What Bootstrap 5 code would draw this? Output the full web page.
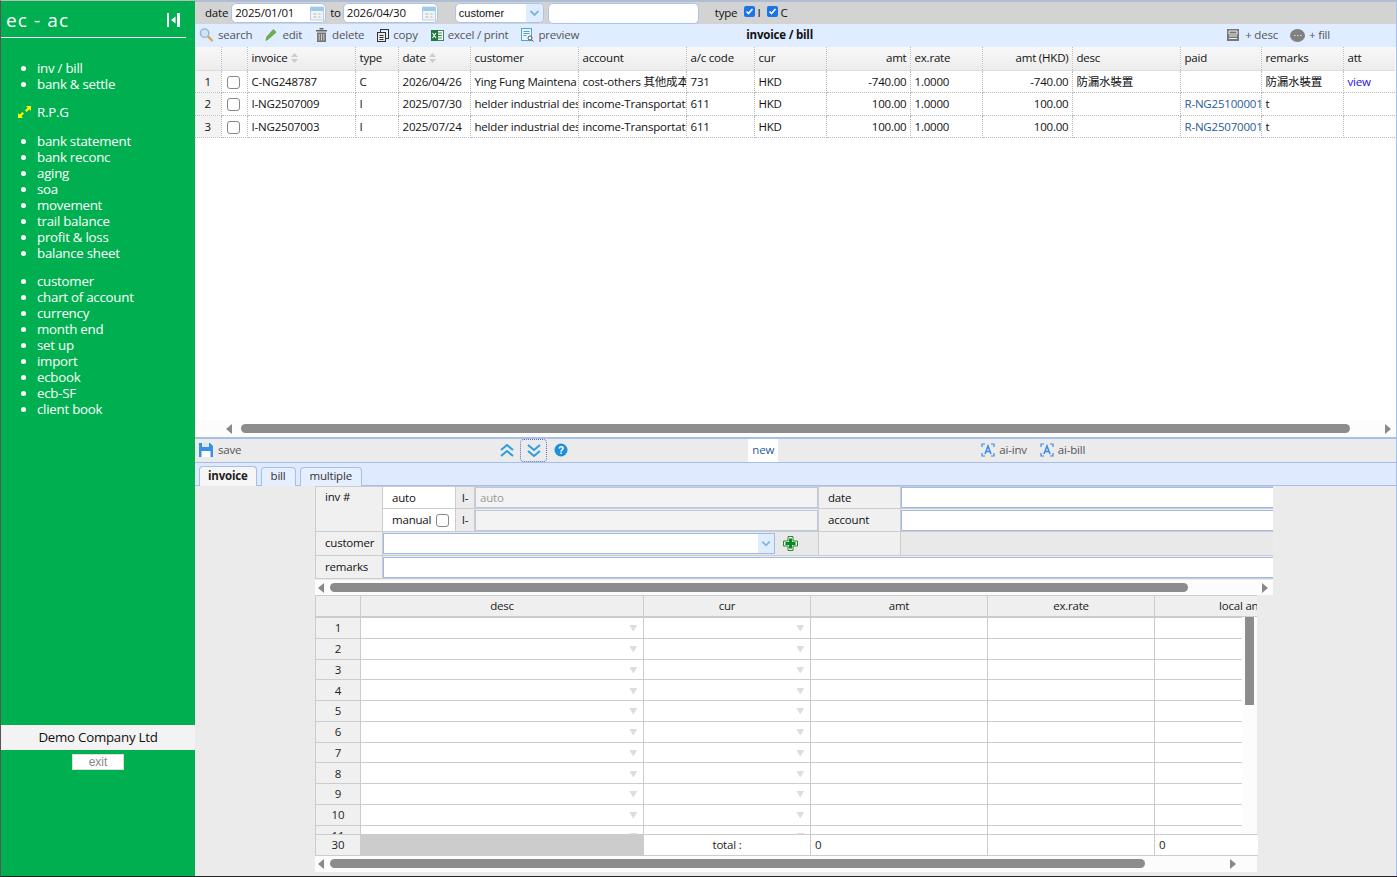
<!DOCTYPE html>
<html lang="en">
<head>
  <meta charset="UTF-8">
  <title>ec - ac</title>
  <link href="https://cdn.jsdelivr.net/npm/bootstrap@5.3.3/dist/css/bootstrap.min.css" rel="stylesheet">
  <style>
    html, body { height: 877px; overflow: hidden; }
    body {
      font-family: "Open Sans", "Noto Sans CJK TC", sans-serif;
      font-size: 11.5px;
      letter-spacing: -0.2px;
      color: #111;
      background: #fff;
      border-top: 1px solid #bbb;
      border-left: 1px solid #555;
      border-bottom: 1px solid #222;
    }
    .app-shell { height: 875px; }

    /* side menu */
    .side-menu { width: 194px; background: #00b050; color: #fff; flex: none; }
    .side-head { height: 37px; width: 185px; border-bottom: 1px solid #fff; padding: 2px 5px 0; }
    .side-title { font-size: 19px; line-height: 24px; letter-spacing: 1.1px; }
    .side-list { margin: 0; padding: 0 0 0 36px; font-size: 13.3px; letter-spacing: -0.25px; line-height: 16px; }
    .side-gap-a { margin-top: 22px; }
    .side-rpg { margin: 12px 0 0 17px; font-size: 13.3px; letter-spacing: -0.25px; line-height: 16px; gap: 6px; }
    .side-gap-b { margin-top: 13px; }
    .side-gap-c { margin-top: 12px; }
    .side-foot { padding-bottom: 106px; }
    .side-company { height: 25px; line-height: 25px; background: #f3f3f3; color: #111; font-size: 13.3px; letter-spacing: -0.25px; text-align: center; }
    .side-exit {
      width: 52px; height: 16px; margin: 4px auto 0; line-height: 15px; font-size: 12px; letter-spacing: 0;
      background: #fff; color: #888; border: 1px solid #ddd;
      font-family: "Liberation Sans", sans-serif; text-align: center;
    }

    /* top */
    .main-pane { min-width: 0; border-right: 1px solid #a4bfe8; }
    .filter-bar { height: 23px; background: #d3d3d3; border-top: 1px solid #a4bfe8; padding-left: 10px; flex: none; }
    .date-box {
      width: 95px; height: 20px; background: #fff; border: 1px solid #a9c4ec; border-radius: 5px;
      padding-left: 3px; line-height: 18px; color: #111;
    }
    .date-first { margin-left: 3px; }
    .to-label { margin: 0 2px 0 4px; }
    .cal-btn { width: 16px; height: 18px; }
    .combo-box { width: 89px; height: 20px; background: #fff; border: 1px solid #a9c4ec; border-radius: 5px; margin-left: 17px; padding-left: 3px; line-height: 18px; font-family: "Liberation Sans", sans-serif; font-size: 11px; letter-spacing: 0; }
    .combo-arrow { width: 17px; height: 18px; background: #e0ecff; border-radius: 0 4px 4px 0; }
    .text-box { width: 151px; height: 21px; background: #fff; border: 1px solid #a9c4ec; border-radius: 5px; margin-left: 4px; }
    .type-group { margin-left: 16px; gap: 7px; }
    .mini-check { width: 11px; height: 11px; background: #1a73e8; border-radius: 2px; margin: 0 2px 3px 0; display: inline-block; }

    .tool-bar { height: 23px; background: #e0ecff; color: #555; padding: 0 0 1px 4px; flex: none; }
    .tool-item { gap: 4px; margin-right: 13px; }
    .tool-title { margin-left: 154px; font-weight: 700; color: #111; }
    .tool-desc { margin-right: 12px; gap: 6px; }
    .tool-fill { margin-right: 66px; }

    /* list table */
    .list-wrap { height: 373px; flex: none; overflow: hidden; }
    .list-table { table-layout: fixed; width: 1200px; margin: 0; border-collapse: collapse; }
    .list-table col:nth-child(1), .list-table col:nth-child(2) { width: 26px; }
    .list-table col:nth-child(3) { width: 108px; }
    .list-table col:nth-child(4) { width: 43px; }
    .list-table col:nth-child(5) { width: 72px; }
    .list-table col:nth-child(6) { width: 108px; }
    .list-table col:nth-child(7) { width: 108px; }
    .list-table col:nth-child(8) { width: 68px; }
    .list-table col:nth-child(9) { width: 72px; }
    .list-table col:nth-child(10) { width: 84px; }
    .list-table col:nth-child(11) { width: 72px; }
    .list-table col:nth-child(12) { width: 90px; }
    .list-table col:nth-child(13) { width: 108px; }
    .list-table col:nth-child(14) { width: 81px; }
    .list-table col:nth-child(15) { width: 82px; }
    .list-table col:nth-child(16) { width: 52px; }
    .list-table th, .list-table td {
      padding: 2px 4px 0; font-weight: 400; font-size: 11.5px; color: #111; background: #fff;
      border: 0; border-right: 1px dotted #bbb; border-bottom: 1px dotted #bbb;
      white-space: nowrap; overflow: hidden; height: 22.6px; line-height: 18px; box-shadow: none;
    }
    .list-table th { height: 23px; padding-top: 2px; vertical-align: top; background: linear-gradient(#f8f8f8, #ececec); border-bottom: 1px solid #ddd; }
    .list-table .text-end { padding-right: 3px; }
    .list-table td.row-no { background: #f3f3f3; text-align: center; padding: 2px 0 0; }
    .list-table td.check-cell { text-align: center; padding: 0 1px 0 0; background: #fff; vertical-align: middle; }
    .list-table th:last-child, .list-table td:last-child { border-right: 0; }
    .list-table .paid-link { color: #2a5a9a; }
    .list-table .view-link { color: #1a0dee; text-decoration: none; }
    .sort-mark { display: inline-block; width: 7px; height: 10px; vertical-align: -1px; margin-left: 1px; }
    .box-check { width: 13px; height: 13px; border: 1px solid #888; border-radius: 3px; background: #fff; display: inline-block; vertical-align: middle; }

    .scroll-row { height: 17px; background: #fcfcfc; flex: none; }
    .scroll-thumb { height: 9px; background: #8c8c8c; border-radius: 5px; }
    .arrow-l { width: 0; height: 0; border: 5px solid transparent; border-right: 6px solid #888; border-left: 0; }
    .arrow-r { width: 0; height: 0; border: 5px solid transparent; border-left: 6px solid #888; border-right: 0; }
    .list-arrow-l { margin-left: 31px; }
    .list-thumb { width: 1109px; margin-left: 9px; }
    .list-arrow-r { margin-right: 5px; }

    /* save bar + tabs */
    .save-bar { height: 26px; background: #ebebeb; border-top: 2px solid #a4bfe8; border-bottom: 1px solid #a4bfe8; color: #555; padding: 0 0 1px 4px; flex: none; }
    .save-label { margin-left: 5px; }
    .arrow-tgl { width: 27px; height: 23px; }
    .arrow-up { width: 26px; margin-left: 253px; }
    .arrow-tgl-on { outline: 1px dotted #5a6ad0; outline-offset: -1px; border-radius: 4px; }
    .help-mark { margin-left: 7px; }
    .new-tag { width: 30px; height: 23px; line-height: 21px; background: #fff; color: #2a5a9a; text-align: center; margin-left: 180px; }
    .ai-inv { margin-left: 203px; }
    .ai-bill { margin-left: 13px; }
    .tab-bar { height: 23px; background: #dfeaff; border-bottom: 1px solid #a4bfe8; padding-left: 4px; gap: 4px; flex: none; align-items: flex-end; }
    .tab-btn { height: 19px; line-height: 16px; padding: 0 9px; border: 1px solid #a4bfe8; border-bottom: 0; border-radius: 4px 4px 0 0; background: #e6efff; color: #333; margin-bottom: -1px; }
    .tab-btn-on { height: 20px; line-height: 17px; padding: 0 8px; background: #f6f6f6; font-weight: 700; color: #222; }

    /* form */
    .edit-pane { background: #ebebeb; min-height: 0; padding-left: 120px; }
    .edit-inner { width: 958px; }
    .form-tbl { width: 957px; table-layout: fixed; border-collapse: collapse; margin: 0; }
    .form-tbl col:nth-child(1) { width: 67px; }
    .form-tbl col:nth-child(2) { width: 73px; }
    .form-tbl col:nth-child(3) { width: 19px; }
    .form-tbl col:nth-child(4) { width: 344px; }
    .form-tbl col:nth-child(5) { width: 82px; }
    .form-tbl col:nth-child(6) { width: 372px; }
    .form-tbl td { padding: 0; border: 1px solid #ccc; background: #f0f0f0; vertical-align: middle; line-height: 20px; color: #111; }
    .form-tbl .form-row-a td { height: 22px; }
    .form-tbl .form-row-b td { height: 23px; }
    .form-tbl .form-row-c td { height: 24px; }
    .form-tbl .form-row-c .cell-label { padding-bottom: 2px; }
    .form-tbl .form-row-d td { height: 23px; }
    .form-tbl .cell-label { padding-left: 9px; }
    .form-tbl .cell-white { background: #fff; padding-left: 9px; }
    .form-tbl .cell-pre { text-align: center; background: #ececec; }
    .form-tbl .cell-none { background: #e9e9e9; border-left: 0; border-right: 0; }
    .form-tbl .cell-plain { background: #e9e9e9; }
    .form-tbl .cell-open { border-right: 0; }
    .form-in { height: 21px; background: #fff; border: 1px solid #9dbbe8; }
    .form-in-off { background: #f3f3f3; color: #999; padding-left: 4px; line-height: 19px; border-color: #b9c9e0; }
    .form-in-open { border-right: 0; }
    .cust-box { width: 392px; height: 21px; background: #fff; border: 1px solid #9dbbe8; }
    .cust-arrow { width: 16px; height: 19px; background: #e0ecff; }
    .manual-box { margin-left: 2px; }

    /* grid */
    .sub-scroll { height: 15px; margin-top: 1px; background: #fcfcfc; }
    .sub-arrow-l { margin-left: 3px; }
    .sub-thumb { width: 858px; margin-left: 6px; }
    .sub-arrow-r { margin-right: 5px; }
    .foot-scroll { width: 942px; margin-top: 0; height: 16px; }
    .foot-thumb { width: 815px; margin-left: 6px; }
    .foot-arrow-r { margin-right: 21px; }
    .grid-tbl { table-layout: fixed; width: 942px; margin: 0; border-collapse: collapse; }
    .grid-tbl col:nth-child(1) { width: 45px; }
    .grid-tbl col:nth-child(2) { width: 283px; }
    .grid-tbl col:nth-child(3) { width: 167px; }
    .grid-tbl col:nth-child(4) { width: 177px; }
    .grid-tbl col:nth-child(5) { width: 167px; }
    .grid-tbl col:nth-child(6) { width: 103px; }
    .grid-tbl td { padding: 0; background: #fff; border: 1px solid #ccc; height: 20.75px; line-height: 19px; color: #222; }
    .grid-tbl .grid-head { background: #efefef; text-align: center; height: 21px; line-height: 17px; padding-bottom: 2px; }
    .grid-tbl .grid-no { background: #f0f0f0; text-align: center; }
    .grid-tbl .grid-combo { text-align: right; padding-right: 6px; color: #ddd; font-size: 8px; }
    .grid-tbl .grid-grey { background: #ccc; }
    .grid-tbl .grid-pad { padding-left: 4px; }
    .grid-tbl .grid-end { border-right: 0; }
    .grid-clip { height: 239px; overflow: hidden; width: 942px; }
    .grid-body { width: 927px; overflow: hidden; height: 219px; }
    .grid-rail { width: 15px; background: #fcfcfc; padding: 0 3px; }
    .grid-rail-thumb { width: 9px; height: 88px; background: #8c8c8c; }
    .local-head { overflow: hidden; white-space: nowrap; padding-left: 64px !important; text-align: left !important; border-right: 0 !important; }
  </style>
</head>
<body>
  <svg width="0" height="0" class="d-none">
    <symbol id="ic-ai" viewBox="0 0 14 14">
      <path d="M1 4V1h3M10 1h3v3M1 10v3h3M10 13h3v-3" fill="none" stroke="#3b8be8" stroke-width="1.2"/>
      <path d="M4 11 7 3l3 8M5.2 8.5h3.6" fill="none" stroke="#3b8be8" stroke-width="1.5"/>
    </symbol>
    <symbol id="ic-cal" viewBox="0 0 16 18">
      <rect x="1.5" y="3" width="13" height="13" fill="#eef4fb" stroke="#b9cfe6"/>
      <rect x="1.5" y="3" width="13" height="4" fill="#9ccbe9"/>
      <path d="M4.5 10h3M4.5 13h3M9.5 10h2M9.5 13h2" stroke="#c9b48a"/>
    </symbol>
    <symbol id="ic-down" viewBox="0 0 17 18">
      <path d="m4.5 7 4 4 4-4" fill="none" stroke="#7fb2e0" stroke-width="1.8"/>
    </symbol>
  </svg>

  <div class="app-shell d-flex">
    <aside class="side-menu d-flex flex-column">
      <div class="side-head d-flex align-items-center justify-content-between">
        <span class="side-title">ec - ac</span>
        <svg width="15" height="14" viewBox="0 0 15 14"><path d="M1 0h2v14H1zM11 0h3v14h-3z" fill="#fff"/><path d="M9.5 3.5v7L5 7z" fill="#fff"/></svg>
      </div>
      <ul class="side-list side-gap-a">
        <li>inv / bill</li>
        <li>bank &amp; settle</li>
      </ul>
      <div class="side-rpg d-flex align-items-center">
        <svg width="13" height="12" viewBox="0 0 13 12"><path d="M8 0h5v5l-1.7-1.7L8.6 6 7 4.4l2.7-2.7zM0 7l1.7 1.7L4.4 6 6 7.6 3.3 10.3 5 12H0z" fill="#ff0"/></svg>
        <span>R.P.G</span>
      </div>
      <ul class="side-list side-gap-b">
        <li>bank statement</li>
        <li>bank reconc</li>
        <li>aging</li>
        <li>soa</li>
        <li>movement</li>
        <li>trail balance</li>
        <li>profit &amp; loss</li>
        <li>balance sheet</li>
      </ul>
      <ul class="side-list side-gap-c">
        <li>customer</li>
        <li>chart of account</li>
        <li>currency</li>
        <li>month end</li>
        <li>set up</li>
        <li>import</li>
        <li>ecbook</li>
        <li>ecb-SF</li>
        <li>client book</li>
      </ul>
      <div class="mt-auto side-foot">
        <div class="side-company">Demo Company Ltd</div>
        <div class="side-exit">exit</div>
      </div>
    </aside>

    <main class="main-pane flex-grow-1 d-flex flex-column">
      <div class="filter-bar d-flex align-items-center">
        <span>date</span>
        <div class="date-box date-first d-flex justify-content-between">2025/01/01<svg class="cal-btn"><use href="#ic-cal"/></svg></div>
        <span class="to-label">to</span>
        <div class="date-box d-flex justify-content-between">2026/04/30<svg class="cal-btn"><use href="#ic-cal"/></svg></div>
        <div class="combo-box d-flex justify-content-between">customer<svg class="combo-arrow"><use href="#ic-down"/></svg></div>
        <div class="text-box"></div>
        <div class="type-group d-flex align-items-center">
          <span>type</span>
          <span class="d-flex align-items-center"><svg class="mini-check" viewBox="0 0 11 11"><path d="m2.5 5.5 2 2 4-4.5" fill="none" stroke="#fff" stroke-width="1.6"/></svg>I</span>
          <span class="d-flex align-items-center"><svg class="mini-check" viewBox="0 0 11 11"><path d="m2.5 5.5 2 2 4-4.5" fill="none" stroke="#fff" stroke-width="1.6"/></svg>C</span>
        </div>
      </div>

      <div class="tool-bar d-flex align-items-center">
        <span class="tool-item d-flex align-items-center">
          <svg width="15" height="16" viewBox="0 0 16 16"><circle cx="6" cy="6" r="4.5" fill="#cfe3f5" stroke="#8fb3d0" stroke-width="1.5"/><path d="m9.5 9.5 5 5" stroke="#d9a85f" stroke-width="2.4"/></svg>search
        </span>
        <span class="tool-item d-flex align-items-center">
          <svg width="13" height="14" viewBox="0 0 14 14"><path d="M1 13 2 9l7-8 3 3-8 7z" fill="#6fb04a" stroke="#4c8a30" stroke-width=".6"/></svg>edit
        </span>
        <span class="tool-item d-flex align-items-center">
          <svg width="13" height="14" viewBox="0 0 13 14"><path d="M1 2h11v1.5H1zM4.5 0h4v1.5h-4z" fill="#666"/><path d="M2 4.5h9V14H2z" fill="#777"/><path d="M4.2 6v6.5M6.500 6v6.500M8.800 6v6.500" stroke="#ccc"/></svg>delete
        </span>
        <span class="tool-item d-flex align-items-center">
          <svg width="12" height="13" viewBox="0 0 12 13"><rect x="3.500" y=".5" width="8" height="9" fill="#e0ecff" stroke="#333"/><rect x=".5" y="3.500" width="8" height="9" fill="#e8e8e8" stroke="#333"/><path d="M2.500 6.500h4M2.500 8.500h4M2.500 10.500h4" stroke="#333"/></svg>copy
        </span>
        <span class="tool-item d-flex align-items-center">
          <svg width="13" height="13" viewBox="0 0 13 13"><rect x="5" y="1.500" width="7.500" height="10" fill="#fff" stroke="#3d8a4f"/><path d="M7 4h4M7 6.500h4M7 9h4" stroke="#3d8a4f"/><rect y="1" width="7" height="11" fill="#1e7a3c"/><path d="m1.500 4 3.500 5M5 4 1.500 9" stroke="#fff" stroke-width="1.100"/></svg>excel / print
        </span>
        <span class="tool-item d-flex align-items-center">
          <svg width="13" height="14" viewBox="0 0 13 14"><rect x=".5" y=".5" width="10" height="12" fill="#eaf4fc" stroke="#4fa3d9"/><path d="M2.500 3.500h6M2.500 5.500h6M2.500 7.500h3" stroke="#4fa3d9"/><circle cx="9" cy="10" r="2" fill="#fff" stroke="#555"/><path d="m10.500 11.500 2 2" stroke="#555"/></svg>preview
        </span>
        <span class="tool-title">invoice / bill</span>
        <span class="tool-item tool-desc d-flex align-items-center ms-auto">
          <svg width="12" height="12" viewBox="0 0 12 12"><rect width="12" height="12" fill="#777"/><path d="M2 2h8v3H2zM2 7h8M2 9.500h8" stroke="#eee" fill="none"/></svg>+ desc
        </span>
        <span class="tool-item tool-fill d-flex align-items-center">
          <svg width="15" height="13" viewBox="0 0 15 13"><ellipse cx="7.500" cy="6.500" rx="7.500" ry="6.500" fill="#808080"/><path d="M4 6.500h1.500M7 6.500h1.500M10 6.500h1.500" stroke="#ddd"/></svg>+ fill
        </span>
      </div>

      <div class="list-wrap">
        <table class="table list-table">
          <colgroup>
            <col><col><col><col><col><col><col><col><col><col><col><col><col><col><col><col>
          </colgroup>
          <thead>
            <tr>
              <th></th><th></th>
              <th>invoice <svg class="sort-mark" viewBox="0 0 7 10"><path d="M3.500 0 7 4H0zM0 6h7l-3.500 4z" fill="#ccc"/></svg></th>
              <th>type</th>
              <th>date <svg class="sort-mark" viewBox="0 0 7 10"><path d="M3.500 0 7 4H0zM0 6h7l-3.500 4z" fill="#ccc"/></svg></th>
              <th>customer</th><th>account</th><th>a/c code</th><th>cur</th>
              <th class="text-end">amt</th><th>ex.rate</th><th class="text-end">amt (HKD)</th>
              <th>desc</th><th>paid</th><th>remarks</th><th>att</th>
            </tr>
          </thead>
          <tbody>
            <tr>
              <td class="row-no">1</td><td class="check-cell"><span class="box-check"></span></td>
              <td>C-NG248787</td><td>C</td><td>2026/04/26</td><td>Ying Fung Maintena</td><td>cost-others 其他成本</td><td>731</td><td>HKD</td>
              <td class="text-end">-740.00</td><td>1.0000</td><td class="text-end">-740.00</td><td>防漏水裝置</td><td></td><td>防漏水裝置</td><td><a class="view-link" href="#">view</a></td>
            </tr>
            <tr>
              <td class="row-no">2</td><td class="check-cell"><span class="box-check"></span></td>
              <td>I-NG2507009</td><td>I</td><td>2025/07/30</td><td>helder industrial des</td><td>income-Transportati</td><td>611</td><td>HKD</td>
              <td class="text-end">100.00</td><td>1.0000</td><td class="text-end">100.00</td><td></td><td class="paid-link">R-NG25100001</td><td>t</td><td></td>
            </tr>
            <tr>
              <td class="row-no">3</td><td class="check-cell"><span class="box-check"></span></td>
              <td>I-NG2507003</td><td>I</td><td>2025/07/24</td><td>helder industrial des</td><td>income-Transportati</td><td>611</td><td>HKD</td>
              <td class="text-end">100.00</td><td>1.0000</td><td class="text-end">100.00</td><td></td><td class="paid-link">R-NG25070001</td><td>t</td><td></td>
            </tr>
          </tbody>
        </table>
      </div>

      <div class="scroll-row d-flex align-items-center">
        <span class="arrow-l list-arrow-l"></span>
        <span class="scroll-thumb list-thumb"></span>
        <span class="arrow-r list-arrow-r ms-auto"></span>
      </div>

      <div class="save-bar d-flex align-items-center">
        <svg width="14" height="14" viewBox="0 0 14 14"><path d="M0 0h11l3 3v11H0z" fill="#3a8ee6"/><rect x="3" y="0" width="7" height="4" fill="#d8e8f8"/><rect x="2.500" y="8" width="9" height="6" fill="#fff"/></svg>
        <span class="save-label">save</span>
        <span class="arrow-tgl arrow-up d-flex align-items-center justify-content-center">
          <svg width="14" height="13" viewBox="0 0 14 13"><path d="m1 6 6-5 6 5M1 12l6-5 6 5" fill="none" stroke="#2b9ee0" stroke-width="2"/></svg>
        </span>
        <span class="arrow-tgl arrow-tgl-on d-flex align-items-center justify-content-center">
          <svg width="14" height="13" viewBox="0 0 14 13"><path d="m1 1 6 5 6-5M1 7l6 5 6-5" fill="none" stroke="#2b9ee0" stroke-width="2"/></svg>
        </span>
        <svg class="help-mark" width="14" height="14" viewBox="0 0 14 14"><circle cx="7" cy="7" r="6.500" fill="#1f8fd8"/><text x="7" y="10.500" font-size="10" font-weight="700" fill="#fff" text-anchor="middle" font-family="Liberation Sans">?</text></svg>
        <span class="new-tag">new</span>
        <span class="ai-inv d-flex align-items-center gap-1"><svg width="14" height="14"><use href="#ic-ai"/></svg>ai-inv</span>
        <span class="ai-bill d-flex align-items-center gap-1"><svg width="14" height="14"><use href="#ic-ai"/></svg>ai-bill</span>
      </div>

      <div class="tab-bar d-flex">
        <span class="tab-btn tab-btn-on">invoice</span>
        <span class="tab-btn">bill</span>
        <span class="tab-btn">multiple</span>
      </div>

      <div class="edit-pane flex-grow-1">
        <div class="edit-inner">
          <table class="form-tbl">
            <colgroup>
              <col><col><col><col><col><col>
            </colgroup>
            <tbody>
              <tr class="form-row-a">
                <td class="cell-label align-top" rowspan="2">inv #</td>
                <td class="cell-white">auto</td>
                <td class="cell-pre">I-</td>
                <td><div class="form-in form-in-off">auto</div></td>
                <td class="cell-label">date</td>
                <td class="cell-open"><div class="form-in form-in-open"></div></td>
              </tr>
              <tr class="form-row-b">
                <td class="cell-white">manual <span class="box-check manual-box"></span></td>
                <td class="cell-pre">I-</td>
                <td><div class="form-in form-in-off"></div></td>
                <td class="cell-label">account</td>
                <td class="cell-open"><div class="form-in form-in-open"></div></td>
              </tr>
              <tr class="form-row-c">
                <td class="cell-label">customer</td>
                <td colspan="3" class="cell-plain">
                  <div class="d-flex align-items-center">
                    <div class="cust-box d-flex justify-content-end"><svg class="cust-arrow"><use href="#ic-down"/></svg></div>
                    <svg class="ms-2" width="15" height="15" viewBox="0 0 15 15"><path d="M5 .5h5V5h4.500v5H10v4.500H5V10H.5V5H5z" fill="#e6f3e6" stroke="#2a8a3a"/><path d="M6 2.500h3V6h3.500v3H9v3.500H6V9H2.500V6H6z" fill="#0b8a20"/></svg>
                  </div>
                </td>
                <td></td>
                <td class="cell-none"></td>
              </tr>
              <tr class="form-row-d">
                <td class="cell-label">remarks</td>
                <td colspan="5" class="cell-open"><div class="form-in form-in-open"></div></td>
              </tr>
            </tbody>
          </table>

          <div class="sub-scroll d-flex align-items-center">
            <span class="arrow-l sub-arrow-l"></span>
            <span class="scroll-thumb sub-thumb"></span>
            <span class="arrow-r sub-arrow-r ms-auto"></span>
          </div>

          <div class="grid-clip">
            <table class="grid-tbl">
              <colgroup><col><col><col><col><col><col></colgroup>
              <tbody>
                <tr>
                  <td class="grid-head"></td><td class="grid-head">desc</td><td class="grid-head">cur</td><td class="grid-head">amt</td><td class="grid-head">ex.rate</td><td class="grid-head local-head">local an</td>
                </tr>
              </tbody>
            </table>
            <div class="d-flex">
              <div class="grid-body">
                <table class="grid-tbl">
                  <colgroup><col><col><col><col><col><col></colgroup>
                  <tbody id="gridRows"></tbody>
                </table>
              </div>
              <div class="grid-rail"><div class="grid-rail-thumb"></div></div>
            </div>
          </div>
          <table class="grid-tbl">
            <colgroup><col><col><col><col><col><col></colgroup>
            <tbody>
              <tr>
                <td class="grid-no">30</td><td class="grid-grey"></td><td class="text-center">total :</td><td class="grid-pad">0</td><td></td><td class="grid-pad grid-end">0</td>
              </tr>
            </tbody>
          </table>
          <div class="sub-scroll foot-scroll d-flex align-items-center">
            <span class="arrow-l sub-arrow-l"></span>
            <span class="scroll-thumb foot-thumb"></span>
            <span class="arrow-r foot-arrow-r ms-auto"></span>
          </div>
        </div>
      </div>
    </main>
  </div>

  <script>
    var rows = '';
    for (var i = 1; i <= 11; i++) {
      rows += '<tr><td class="grid-no">' + i + '</td><td class="grid-combo">▼</td><td class="grid-combo">▼</td><td></td><td></td><td></td></tr>';
    }
    document.getElementById('gridRows').innerHTML = rows;
  </script>
  <script src="https://cdn.jsdelivr.net/npm/bootstrap@5.3.3/dist/js/bootstrap.bundle.min.js"></script>
</body>
</html>
